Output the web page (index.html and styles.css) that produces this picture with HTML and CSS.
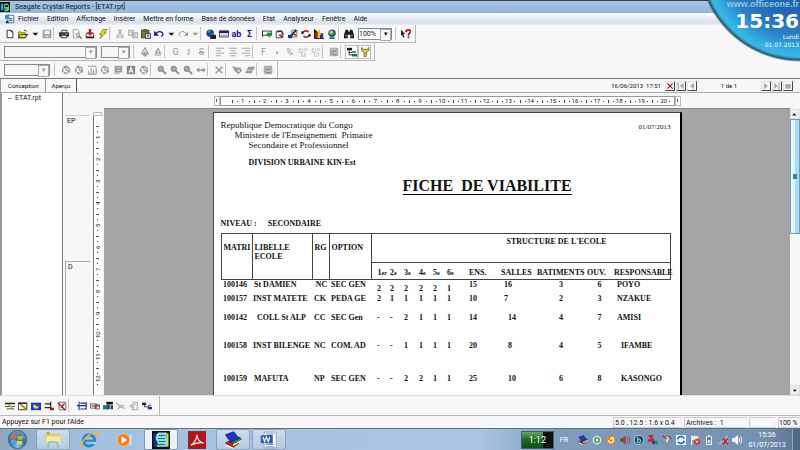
FILE: index.html
```html
<!DOCTYPE html>
<html lang="fr">
<head>
<meta charset="utf-8">
<title>Seagate Crystal Reports - [ETAT.rpt]</title>
<link rel="stylesheet" href="styles.css">
</head>
<body>
<svg class="sprite" aria-hidden="true">
  <symbol id="app" viewBox="0 0 12 12"><path fill="#111" d="M0 0h12v12H0z"/><path fill="#2aa8c8" d="M1 2h3v8H1z"/><path fill="#5fd8a0" d="M5 2h5v2H6v2h4v5H5V9h3V8H5z"/><path fill="#e8e040" d="M10 4h1v6h-1z"/></symbol>
  <symbol id="doc" viewBox="0 0 12 12"><path fill="#fff" stroke="#267" d="M3.500 1.500h7v9h-7z"/><path fill="#2a9aa8" d="M0 1h5v5H0z"/><path fill="#137" d="M5 5h4v1H5zM5 7h4v1H5zM1 8h3v3H1z"/></symbol>
  <symbol id="new" viewBox="0 0 12 12"><path fill="#fff" stroke="#111" d="M2.500 1.500h5l2 2v7h-7zM7.500 1.500v2h2"/></symbol>
  <symbol id="open" viewBox="0 0 12 12"><path fill="#e5d83a" stroke="#776a00" d="M.5 10.500v-7h3l1 1h4v2h3l-3 4z"/><path fill="none" stroke="#222" d="M.5 10.500l2-4h9l-3 4zM7 2q2-1.500 3.500 1"/></symbol>
  <symbol id="arrow" viewBox="0 0 12 12"><path fill="currentColor" d="M3 4.500h7L6.500 8z"/></symbol>
  <symbol id="save" viewBox="0 0 12 12"><path fill="#aaa" stroke="#888" d="M1.500 1.500h9v9h-9z"/><path fill="#f4f4f4" d="M3 2h6v4H3z"/><path fill="#ddd" d="M4 8h4v2H4z"/></symbol>
  <symbol id="print" viewBox="0 0 12 12"><path fill="#fff" stroke="#222" d="M3.500 4V1.500h6V4"/><path fill="#555" stroke="#111" d="M.5 4.500h11v4H.5z"/><path fill="#fff" stroke="#111" d="M2.500 7.500h7v3h-7z"/><path fill="#dd0" d="M8 5.500h2v1H8z"/></symbol>
  <symbol id="preview" viewBox="0 0 12 12"><path fill="#f2f2f2" stroke="#999" d="M1.500.5h5l2 2v8h-7z"/><circle cx="7" cy="7" r="2" fill="#ddd" stroke="#888"/><path stroke="#888" stroke-width="2" d="M8.500 8.500l3 3"/></symbol>
  <symbol id="export" viewBox="0 0 12 12"><path fill="#eee" stroke="#444" d="M1.500 5.500h9v5h-9z"/><path fill="#c01818" d="M4.500 0h3v4H10L6 8 2 4h2.500z"/><path fill="#222" d="M1 9h10v2H1z"/></symbol>
  <symbol id="bolt" viewBox="0 0 12 12"><path fill="#f5e518" stroke="#665c00" stroke-width=".8" d="M6 .5h5L7.500 4H10l-8 7.500L5 6.500H2z"/></symbol>
  <symbol id="cut" viewBox="0 0 12 12"><path fill="none" stroke="#999" stroke-width="1.200" d="M4 0l4 7.500M8 0L4 7.500"/><circle cx="3.500" cy="9" r="1.600" fill="none" stroke="#999"/><circle cx="8.500" cy="9" r="1.600" fill="none" stroke="#999"/></symbol>
  <symbol id="copy" viewBox="0 0 12 12"><path fill="#eee" stroke="#999" d="M.5 1.500h6v6h-6zM5.500 4.500h6v6h-6z"/><path stroke="#aaa" d="M2 3.500h3M7 6.500h3M7 8.500h3"/></symbol>
  <symbol id="paste" viewBox="0 0 12 12"><path fill="#8a8020" stroke="#222" d="M.5 1.500h9v9h-9z"/><path fill="#ddd" stroke="#222" d="M3.500.5h3v2h-3z"/><path fill="#fff" stroke="#1a1a90" d="M5.500 5.500h6v6h-6z"/><path stroke="#1a1a90" d="M7 7.500h3M7 9.500h3"/></symbol>
  <symbol id="undo" viewBox="0 0 12 12"><path fill="none" stroke="currentColor" stroke-width="1.500" d="M2 6q4-5 8-1.500Q12 7 8.500 9"/><path fill="currentColor" d="M0 2v6h6z"/></symbol>
  <symbol id="redo" viewBox="0 0 12 12"><path fill="none" stroke="currentColor" stroke-width="1.200" d="M10 6Q6 1 2 4.500 0 7 3.500 9"/><path fill="currentColor" d="M12 3v5H7z"/></symbol>
  <symbol id="globe" viewBox="0 0 12 12"><circle cx="5" cy="5" r="4.500" fill="#1c3f8c"/><path fill="#38a060" d="M2 2l3-1 1 2-2 2-2-1zM6 5l3 0-1 3-2-1z"/><path fill="#222" d="M7 7h5v5H5V9z"/></symbol>
  <symbol id="field" viewBox="0 0 12 12"><path fill="#fff" stroke="#223" d="M.5 2.500h11v7H.5z"/><path fill="#1a1a80" d="M0 2h12v3H0z"/><path stroke="#334" stroke-dasharray="2 1" d="M2 7.500h9"/></symbol>
  <symbol id="section" viewBox="0 0 12 12"><path fill="#fff" stroke="#222" d="M.5 2.500h11v5H.5z"/><path stroke="#222" d="M.5 2v8"/><path fill="#18903a" d="M5 6l4-3v2h3v3H9v3z" transform="rotate(-20 8 7)"/></symbol>
  <symbol id="sort" viewBox="0 0 12 12"><path fill="#fff" stroke="#333" d="M1.500 2.500h7v8h-7z"/><path fill="none" stroke="#222" stroke-width="1.500" d="M3 4q5-4 7 3"/><path stroke="#b02020" stroke-width="2" d="M5 7l5 3"/></symbol>
  <symbol id="brush" viewBox="0 0 12 12"><path fill="#fff" stroke="#555" d="M4.500 1.500h6v8h-6z"/><path stroke="#222" stroke-width="2" d="M10 1L4 8"/><path fill="#1d2f9a" d="M0 7h5v4H0z"/><path fill="#b22" d="M7 6h3v2H7z"/></symbol>
  <symbol id="refresh" viewBox="0 0 12 12"><path fill="none" stroke="#902020" stroke-width="1.800" d="M2 6q0-4 5-4l2 2M10 6q0 4-5 4L3 8"/><path fill="#222" d="M0 3l4 0-3 4zM12 9H8l3-4z"/></symbol>
  <symbol id="chart" viewBox="0 0 12 12"><path stroke="#111" d="M.5 0v11.500H12"/><path fill="#c22" d="M1.500 4h3v7h-3z"/><path fill="#dfd020" d="M4.500 1h3v10h-3z"/><path fill="#2233b0" d="M8 5h3v6H8z"/></symbol>
  <symbol id="map" viewBox="0 0 12 12"><circle cx="6" cy="5" r="4.500" fill="#1d4fb0"/><path fill="#c8d020" d="M3 2l4 0 1 3-3 2-2-2z"/><path fill="#118048" d="M7 5l3 0-2 4-2-1zM3 10h6v2H3z"/></symbol>
  <symbol id="find" viewBox="0 0 12 12"><path fill="#1a1a1a" d="M2 1h3v2h2V1h3l2 6v4H7.500V7h-3v4H0V7z"/><path fill="#ddd" d="M2 7h1v2H2zM9 7h1v2H9z"/></symbol>
  <symbol id="help" viewBox="0 0 12 12"><path fill="#222" d="M0 1l5 5H3l1 4-1.500.5L1.500 7 0 8z"/><path fill="none" stroke="#b01818" stroke-width="2" d="M6 4q0-3 3-3t2 3L9 6.500V8"/><path fill="#b01818" d="M8 9h2v2H8z"/></symbol>
  <symbol id="grow" viewBox="0 0 12 12"><path fill="none" stroke="#999" stroke-width="1.400" d="M2 8l4-7 4 7zM6 5v6M4 9l2 2 2-2"/></symbol>
  <symbol id="shrink" viewBox="0 0 12 12"><path fill="none" stroke="#999" stroke-width="1.300" d="M3 7l3-5 3 5zM2 9.500h8"/></symbol>
  <symbol id="left" viewBox="0 0 12 12"><path stroke="#999" d="M1 1.500h10M1 4.500h6M1 7.500h10M1 10.500h6"/></symbol>
  <symbol id="center" viewBox="0 0 12 12"><path stroke="#999" d="M1 1.500h10M3 4.500h6M1 7.500h10M3 10.500h6"/></symbol>
  <symbol id="right" viewBox="0 0 12 12"><path stroke="#999" d="M1 1.500h10M5 4.500h6M1 7.500h10M5 10.500h6"/></symbol>
  <symbol id="dot" viewBox="0 0 12 12"><path fill="#999" d="M5 5.500h2v2.500H5z"/></symbol>
  <symbol id="dec" viewBox="0 0 12 12"><path fill="none" stroke="#999" stroke-dasharray="2 1" d="M1.500 2.500h4v4h-4zM7 1l4 2-4 2M4.500 8v3h4V7"/></symbol>
  <symbol id="box" viewBox="0 0 12 12"><path fill="#bbb" stroke="#999" d="M1.500 1.500h9v9h-9z"/><path fill="none" stroke="#777" d="M3 8q1-5 3-3t3-2M4 9h5"/></symbol>
  <symbol id="tree" viewBox="0 0 12 12"><path fill="#111" d="M0 1h6v3H0z"/><path fill="none" stroke="#111" d="M2.500 4v5.500H6M2.500 6.500H6"/><path fill="#1c7040" d="M6 5h5v2H6zM6 8.500h6v3H6z"/></symbol>
  <symbol id="key" viewBox="0 0 12 12"><path fill="#e8dc20" stroke="#333" stroke-width=".8" d="M2 .5v4l3 2v5h2.500v-5l3-2v-4L8.500 3h-4z"/></symbol>
  <symbol id="pie" viewBox="0 0 12 12"><circle cx="6" cy="6" r="4" fill="none" stroke="#999" stroke-width="2" stroke-dasharray="4 1"/><path stroke="#999" stroke-width="1.500" d="M6 6V1M6 6l4 2"/></symbol>
  <symbol id="bars" viewBox="0 0 12 12"><path fill="none" stroke="#999" stroke-width="1.300" d="M1 1.500h10M2 11V7M5 11V4M8 11V6M11 11V3M1 11h10"/></symbol>
  <symbol id="fill" viewBox="0 0 12 12"><path fill="#999" d="M2 1h9v8H2z"/><path stroke="#ddd" d="M4 3.500h5M4 6.500h5"/><path fill="#bbb" d="M1 9h7v2H1z"/></symbol>
  <symbol id="abox" viewBox="0 0 12 12"><path fill="#888" d="M1 1h10v10H1z"/><path fill="none" stroke="#fff" stroke-width="1.300" d="M3.500 9.500L6 3l2.500 6.500M4.500 7.500h3"/></symbol>
  <symbol id="lens" viewBox="0 0 12 12"><circle cx="4.500" cy="4.500" r="3" fill="#aaa" stroke="#888" stroke-width="1.400"/><path stroke="#888" stroke-width="2" d="M7 7l4 4"/></symbol>
  <symbol id="wide" viewBox="0 0 12 12"><path fill="#999" d="M0 6l4-3v2h4V3l4 3-4 3V7H4v2z"/></symbol>
  <symbol id="x" viewBox="0 0 12 12"><path stroke="currentColor" stroke-width="1.800" d="M2 2l8 8M10 2l-8 8"/></symbol>
  <symbol id="tag" viewBox="0 0 12 12"><path fill="#999" d="M0 1l5 2h5l2 4-4 4-4-3z"/><circle cx="8" cy="7" r="1.500" fill="#ddd"/></symbol>
  <symbol id="layers" viewBox="0 0 12 12"><path fill="#999" d="M4 2h8L10 6H2zM2 6h8L8 10H0z"/><path stroke="#ddd" d="M2 6.500h8"/></symbol>
  <symbol id="tool1" viewBox="0 0 12 12"><path fill="#222" d="M0 2h12v2H0zM0 6h12v1H0zM2 9h9v1H2z"/><path stroke="#c9b820" stroke-width="2" d="M3 4l6 4"/></symbol>
  <symbol id="tool2" viewBox="0 0 12 12"><path fill="#fff" stroke="#222" d="M.5 2.500h10v8H.5z"/><path stroke="#a58a10" stroke-width="2" d="M2 3l8 7"/><path fill="#222" d="M0 2h11v1.500H0z"/></symbol>
  <symbol id="tool3" viewBox="0 0 12 12"><path fill="#153ac8" d="M0 2h12v9H0z"/><path fill="#e6e23a" d="M2 6l3-2 2 3 3-2-2 4H4z"/></symbol>
  <symbol id="tool4" viewBox="0 0 12 12"><path fill="none" stroke="#222" stroke-width="1.500" d="M1 3.500h7V8H1M8 1v10"/><path fill="#a22" d="M8 8h4v3H8z"/></symbol>
  <symbol id="tool5" viewBox="0 0 12 12"><path fill="#fff" stroke="#555" d="M2.500 1.500h8v9h-8z"/><path stroke="#a22" stroke-width="1.800" d="M1 2l9 9M9 3L5 8"/></symbol>
  <symbol id="tool6" viewBox="0 0 12 12"><path fill="none" stroke="#1a2f90" stroke-width="1.300" d="M4 2.500h8M4 5.500h8M4 9.500h8M2.500 1v10M0 5.500h4M11 2v8"/></symbol>
  <symbol id="tool7" viewBox="0 0 12 12"><path fill="#fff" stroke="#444" d="M.5 3.500h7v5h-7zM6.500 4.500h5v5h-5z"/><path stroke="#b22" stroke-width="1.500" d="M2 6h9"/></symbol>
  <symbol id="tool8" viewBox="0 0 12 12"><path fill="#111" d="M4 1h8v3H4z"/><path fill="#18804a" d="M0 5h5v5H0z"/><path fill="#1a2fa0" d="M5 4h3v6H5z"/><path fill="#444" d="M9 5h3v5H9z"/></symbol>
  <symbol id="tool9" viewBox="0 0 12 12"><path fill="none" stroke="#aaa" stroke-width="1.500" d="M0 2l5 4 5-1M5 6l-3 4M5 7l6 2"/></symbol>
  <symbol id="tool10" viewBox="0 0 12 12"><path fill="none" stroke="#aaa" stroke-width="1.300" d="M4 1.500h6v9H3M1 6l4-2v5zM6 4h2"/></symbol>
  <symbol id="tool11" viewBox="0 0 12 12"><path fill="#222" d="M0 2h5v3H0z"/><path fill="none" stroke="#222" d="M3 5v2h5V5h3"/><path fill="#1a2fa0" d="M7 7h5v3H7z"/></symbol>
  <symbol id="first" viewBox="0 0 12 12"><path fill="#aaa" d="M1 1h2v10H1zM10 1v10L4 6z"/></symbol>
  <symbol id="prev" viewBox="0 0 12 12"><path fill="#aaa" d="M9 1v10L3 6z"/></symbol>
  <symbol id="next" viewBox="0 0 12 12"><path fill="#aaa" d="M3 1v10l6-5z"/></symbol>
  <symbol id="last" viewBox="0 0 12 12"><path fill="#aaa" d="M2 1v10l5-5zM8 1h2v10H8z"/></symbol>
  <symbol id="stop" viewBox="0 0 12 12"><path fill="#aaa" d="M2 3h8v7H2z"/></symbol>
  <radialGradient id="orbfill" cx=".5" cy=".9" r=".9"><stop offset="0" stop-color="#6fd0f0"/><stop offset=".5" stop-color="#2a6ca8"/><stop offset="1" stop-color="#7c9cb8"/></radialGradient>
  <symbol id="orb" viewBox="0 0 24 24"><circle cx="12" cy="12" r="10.500" fill="url(#orbfill)" stroke="#345f88"/><path fill="#e8692c" d="M5.500 7q3-2 6 0l-.8 4.500q-3-1.500-6 0z"/><path fill="#8fc43c" d="M12.500 7.300q3 1.500 6.500 0l-1 4.500q-3 1.500-6.300 0z"/><path fill="#4aa8e8" d="M4.500 12.500q3-1.500 6 0L9.800 17q-3-1.500-6 0z"/><path fill="#f8cc38" d="M11.500 13q3 1.500 6.300 0L17 17.300q-3 1.500-6.300 0z"/></symbol>
  <symbol id="folder" viewBox="0 0 24 24"><path fill="#e8c860" d="M2 2h7l2 2h11v14H2z"/><path fill="#f8e8a0" d="M3 7h19v11H3z"/><path fill="#4aa860" d="M4 2h3v2H4z"/><path fill="none" stroke="#8cc4e8" stroke-width="3" d="M5.500 23v-6q0-2 2-2h9q2 0 2 2v6"/></symbol>
  <symbol id="ie" viewBox="0 0 24 24"><circle cx="12" cy="12.500" r="7.500" fill="none" stroke="#2888d8" stroke-width="4"/><path stroke="#2888d8" stroke-width="3" d="M6 13h14"/><path fill="#b0c9e4" d="M14 14.500h8v3h-8z"/><path fill="none" stroke="#e8b828" stroke-width="2" d="M3 21Q-1 18 8 9t14-7q2 1-1 6"/></symbol>
  <symbol id="wmp" viewBox="0 0 24 24"><path fill="#8ec4e4" d="M10 2h13v20H10z"/><path fill="#c4e2f2" d="M18 4h3v16h-3z"/><circle cx="10" cy="12" r="8.500" fill="#f08020" stroke="#f8d0a0"/><path fill="#fff" d="M7.500 7v10l7-5z"/></symbol>
  <symbol id="crystal" viewBox="0 0 24 24"><path fill="#111" d="M0 0h24v24H0z"/><path fill="#1c2a8c" d="M2 3h5v18H2z"/><path fill="#d8d83a" d="M19 3h3v18h-3z"/><path fill="#8fe0d4" d="M8 2h12q-3 4 0 8t-1 11H6q3-4 0-8t2-11z"/><path stroke="#146a68" stroke-width="1.500" d="M9 6h8M8 10h9M9 14h9M8 18h9"/></symbol>
  <symbol id="pdf" viewBox="0 0 24 24"><path fill="#b81418" stroke="#7c0c10" d="M.5.500h23v23H.5z"/><path fill="none" stroke="#fff" stroke-width="1.600" d="M4 19q7-5 8-14 1 10 9 11-8-2-17 3z"/></symbol>
  <symbol id="books" viewBox="0 0 24 24"><path fill="#c82028" stroke="#611" d="M2 16l9-5 9 5-8 6z"/><path fill="#fff" d="M3 18l9 4v2l-9-4z"/><path fill="#28a038" stroke="#141" d="M9 12l12-4 2 4-11 6z"/><path fill="#fff" d="M12 18l11-6v2l-11 6z"/><path fill="#1c34c8" stroke="#0a1560" d="M2 5l11-4 7 9-11 5z"/></symbol>
  <symbol id="word" viewBox="0 0 24 24"><path fill="#fff" stroke="#88a" d="M5.500 1.500h16v21h-16z"/><path stroke="#7a9ad0" stroke-width="1.500" d="M8 4h11M8 18h11M8 21h11"/><path fill="#2a5cb0" d="M1 6l16-1v12L1 16z"/><path fill="none" stroke="#fff" stroke-width="1.600" d="M4 8l2 6 2.500-6L11 14l2-6"/></symbol>
  <symbol id="gear" viewBox="0 0 12 12"><circle cx="6" cy="6" r="4.500" fill="#5c9a70" stroke="#e4e8e4" stroke-width="1.500"/><circle cx="6" cy="6" r="1.800" fill="#dfe8df"/></symbol>
  <symbol id="swirl" viewBox="0 0 12 12"><circle cx="6" cy="6" r="5.500" fill="#f08018"/><path fill="none" stroke="#fff" stroke-width="1.500" d="M6 3a3 3 0 1 1-3 3M6 3v3"/></symbol>
  <symbol id="speaker" viewBox="0 0 12 12"><path fill="currentColor" d="M0 4h3l4-4v12L3 8H0z"/><path fill="none" stroke="currentColor" d="M8.500 3q2 3 0 6M10.500 1.500q2.500 4.500 0 9"/></symbol>
  <symbol id="bsign" viewBox="0 0 12 12"><circle cx="6" cy="6" r="5.500" fill="#1c3c98" stroke="#bcd"/><path fill="none" stroke="#7fd860" stroke-width="1.500" d="M4.500 2v7h2.500a2 2 0 1 0-2.500-3"/></symbol>
  <symbol id="shield" viewBox="0 0 12 12"><path fill="#d02028" d="M0 0h6v3H3v1h4v4H0V5h3z"/><path fill="#2038a8" d="M5 7h4v4H5z"/><path fill="#20963a" d="M8 7h4v4H8z"/></symbol>
  <symbol id="plug" viewBox="0 0 12 12"><path fill="#ddd" stroke="#666" stroke-width=".7" d="M2 2l8 0-2 5-2 5-2-5z"/><path stroke="#c22" stroke-width="1.500" d="M1 1l5 4M8 1l3 4"/></symbol>
  <symbol id="sync" viewBox="0 0 12 12"><path fill="#eef6fc" d="M0 0h12v12H0z"/><path fill="none" stroke="#1a74c8" stroke-width="2" d="M2 5q1-3.500 5-3l3 2M10 7q-1 3.500-5 3L2 8"/></symbol>
  <symbol id="flag" viewBox="0 0 12 12"><path stroke="#eee" stroke-width="1.500" d="M2 1v11"/><path fill="#eee" d="M2 1h8v5H2z"/><circle cx="8.500" cy="8" r="3.500" fill="#d82828"/><path stroke="#fff" d="M7 6.500l3 3M10 6.500l-3 3"/></symbol>
  <symbol id="battery" viewBox="0 0 12 12"><path fill="#68788a" stroke="#eee" stroke-width="1.300" d="M3 2h6v9.500H3zM5 .5h2"/><path fill="#ddd" d="M4.500 6h3v4h-3z"/></symbol>
  <symbol id="net" viewBox="0 0 12 12"><path fill="#aab4c0" d="M0 9h2v2H0zM3 7h2v4H3zM6 4h2v7H6zM9 1h3v10H9z"/><path stroke="#c82020" stroke-width="2" d="M6 4l6 7M12 4l-6 7"/></symbol>
</svg>

<header class="titlebar"><svg class="ico"><use href="#app"/></svg><h1>Seagate Crystal Reports - [ETAT.rpt]</h1></header>
<nav class="menubar">
  <svg class="ico"><use href="#doc"/></svg>
  <button>Fichier</button><button>Edition</button><button>Affichage</button><button>Insérer</button><button>Mettre en forme</button><button>Base de données</button><button>Etat</button><button>Analyseur</button><button>Fenêtre</button><button>Aide</button>
</nav>

<div class="toolbars">
  <div class="toolbar tight">
    <button aria-label="Nouveau"><svg><use href="#new"/></svg></button><button aria-label="Ouvrir"><svg><use href="#open"/></svg></button><button class="drop" aria-label="Fichiers"><svg><use href="#arrow"/></svg></button><button aria-label="Enregistrer"><svg><use href="#save"/></svg></button><i></i>
    <button aria-label="Imprimer"><svg><use href="#print"/></svg></button><button aria-label="Aperçu"><svg><use href="#preview"/></svg></button><button aria-label="Exporter"><svg><use href="#export"/></svg></button><button aria-label="Actualiser"><svg><use href="#bolt"/></svg></button><i></i>
    <button aria-label="Couper"><svg><use href="#cut"/></svg></button><button aria-label="Copier"><svg><use href="#copy"/></svg></button><button aria-label="Coller"><svg><use href="#paste"/></svg></button><button class="blue" aria-label="Annuler"><svg><use href="#undo"/></svg></button><button class="drop" aria-label="Liste annuler"><svg><use href="#arrow"/></svg></button><button class="off" aria-label="Rétablir"><svg><use href="#redo"/></svg></button><button class="drop off" aria-label="Liste rétablir"><svg><use href="#arrow"/></svg></button><i></i>
    <button aria-label="Web"><svg><use href="#globe"/></svg></button><button aria-label="Champ"><svg><use href="#field"/></svg></button><button class="blue">ab</button><button class="blue">Σ</button><i></i>
    <button aria-label="Section"><svg><use href="#section"/></svg></button><button aria-label="Trier"><svg><use href="#sort"/></svg></button><button aria-label="Style"><svg><use href="#brush"/></svg></button><button aria-label="Rotation"><svg><use href="#refresh"/></svg></button><button aria-label="Graphique"><svg><use href="#chart"/></svg></button><button aria-label="Carte"><svg><use href="#map"/></svg></button><i></i>
    <button aria-label="Rechercher"><svg><use href="#find"/></svg></button>
    <span class="combo zoom"><select aria-label="Zoom"><option>100%</option></select></span><i></i>
    <button aria-label="Aide contextuelle"><svg><use href="#help"/></svg></button>
  </div>
  <div class="toolbar">
    <span class="combo font off"><select aria-label="Police"><option></option></select></span><span class="combo size off"><select aria-label="Taille"><option></option></select></span><i></i>
    <button aria-label="Agrandir"><svg><use href="#grow"/></svg></button><button aria-label="Réduire"><svg><use href="#shrink"/></svg></button><i></i>
    <button class="off">G</button><button class="off ital">I</button><button class="off strike">S</button><i></i>
    <button aria-label="Gauche"><svg><use href="#left"/></svg></button><button aria-label="Centrer"><svg><use href="#center"/></svg></button><button aria-label="Droite"><svg><use href="#right"/></svg></button><i></i>
    <button class="off">F</button><button aria-label="Milliers"><svg><use href="#dot"/></svg></button><button class="off">%</button><button aria-label="Plus de décimales"><svg><use href="#dec"/></svg></button><button aria-label="Moins de décimales"><svg><use href="#dec"/></svg></button><i></i>
    <button aria-label="Image"><svg><use href="#box"/></svg></button><i></i>
    <button class="on" aria-label="Arborescence"><svg><use href="#tree"/></svg></button><button class="on" aria-label="Outils"><svg><use href="#key"/></svg></button>
  </div>
  <div class="toolbar">
    <span class="combo kind off"><select aria-label="Type"><option></option></select></span><i></i>
    <button aria-label="Secteurs"><svg><use href="#pie"/></svg></button><button aria-label="Anneau"><svg><use href="#pie"/></svg></button><button aria-label="Barres"><svg><use href="#bars"/></svg></button><button aria-label="Radar"><svg><use href="#pie"/></svg></button><button aria-label="Remplissage"><svg><use href="#fill"/></svg></button><button aria-label="Texte"><svg><use href="#abox"/></svg></button><button aria-label="Options"><svg><use href="#pie"/></svg></button><i></i>
    <button aria-label="Zoom avant"><svg><use href="#lens"/></svg></button><button aria-label="Zoom arrière"><svg><use href="#lens"/></svg></button><button aria-label="Zoom zone"><svg><use href="#lens"/></svg></button><button aria-label="Largeur"><svg><use href="#wide"/></svg></button><i></i>
    <button class="off" aria-label="Supprimer"><svg><use href="#x"/></svg></button><i></i>
    <button aria-label="Étiquette"><svg><use href="#tag"/></svg></button><button aria-label="Couches"><svg><use href="#layers"/></svg></button><i></i>
    <button aria-label="Cadre"><svg><use href="#box"/></svg></button>
  </div>
</div>

<div class="tabs">
  <button class="tab">Conception</button><button class="tab active">Aperçu</button>
  <div class="pager">
    <time>16/06/2013&nbsp; 17:51</time>
    <button class="close" aria-label="Fermer"><svg><use href="#x"/></svg></button><button aria-label="Première"><svg><use href="#first"/></svg></button><button aria-label="Précédente"><svg><use href="#prev"/></svg></button>
    <span class="pages">1 de 1</span>
    <button aria-label="Suivante"><svg><use href="#next"/></svg></button><button aria-label="Dernière"><svg><use href="#last"/></svg></button><button aria-label="Arrêter"><svg><use href="#stop"/></svg></button>
  </div>
</div>

<main class="work">
  <aside class="outline">ETAT.rpt</aside>
  <div class="bands"><div class="band head">EP</div><div class="band detail">D</div></div>
  <div class="vruler"><b></b><div class="vscale"><span>1</span><span>2</span><span>3</span><span>4</span><span>5</span><span>6</span><span>7</span><span>8</span><span>9</span><span>10</span><span>11</span><span>12</span></div></div>
  <div class="view">
    <div class="hruler"><b></b><div class="hscale"><div class="cells"><span>1</span><span>2</span><span>3</span><span>4</span><span>5</span><span>6</span><span>7</span><span>8</span><span>9</span><span>10</span><span>11</span><span>12</span><span>13</span><span>14</span><span>15</span><span>16</span><span>17</span><span>18</span><span>19</span><span>20</span></div></div><b></b></div>
    <div class="canvas">
      <article class="sheet">
        <div class="masthead">
          <div><p>Republique Democratique du Congo</p><p class="step1">Ministere de l'Enseignement&nbsp; Primaire</p><p class="step2">Secondaire et Professionnel</p></div>
          <time>01/07/2013</time>
        </div>
        <p class="division">DIVISION URBAINE KIN-Est</p>
        <h2>FICHE&nbsp; DE VIABILITE</h2>
        <p class="level"><span>NIVEAU :</span><span>SECONDAIRE</span></p>
        <table>
          <colgroup><col class="c-mat"><col class="c-lib"><col class="c-rg"><col class="c-opt"><col class="c-n1"><col class="c-n"><col class="c-n3"><col class="c-n"><col class="c-n"><col class="c-n6"><col class="c-ens"><col class="c-sal"><col class="c-bat"><col class="c-ouv"><col class="c-resp"></colgroup>
          <thead>
            <tr><th rowspan="2" class="boxed">MATRI</th><th rowspan="2" class="boxed">LIBELLE ECOLE</th><th rowspan="2" class="boxed">RG</th><th rowspan="2" class="boxed">OPTION</th><th colspan="11" class="group">STRUCTURE DE L'ECOLE</th></tr>
            <tr class="sub"><th class="num">1<small>er</small></th><th class="num">2<small>e</small></th><th class="num">3<small>e</small></th><th class="num">4<small>e</small></th><th class="num">5<small>e</small></th><th class="num">6<small>e</small></th><th>ENS.</th><th>SALLES</th><th>BATIMENTS</th><th>OUV.</th><th>RESPONSABLE</th></tr>
          </thead>
          <tbody>
            <tr class="r1"><td>100146</td><td>St DAMIEN</td><td class="mid">NC</td><td>SEC GEN</td><td class="num low">2</td><td class="num low">2</td><td class="num low">2</td><td class="num low">2</td><td class="num low">2</td><td class="num low">1</td><td>15</td><td class="in">16</td><td class="mid">3</td><td class="mid">6</td><td class="in">POYO</td></tr>
            <tr class="r2"><td>100157</td><td class="out">INST MATETE</td><td>CK</td><td>PEDA GE</td><td class="num">2</td><td class="num">1</td><td class="num">1</td><td class="num">1</td><td class="num">1</td><td class="num">1</td><td>10</td><td class="in">7</td><td class="mid">2</td><td class="mid">3</td><td class="in">NZAKUE</td></tr>
            <tr class="r3"><td>100142</td><td class="in">COLL St ALP</td><td>CC</td><td>SEC Gen</td><td class="num">-</td><td class="num">-</td><td class="num">2</td><td class="num">1</td><td class="num">1</td><td class="num">1</td><td>14</td><td class="in2">14</td><td class="mid">4</td><td class="mid">7</td><td class="in">AMISI</td></tr>
            <tr class="r4"><td>100158</td><td class="out">INST BILENGE</td><td>NC</td><td>COM. AD</td><td class="num">-</td><td class="num">-</td><td class="num">1</td><td class="num">1</td><td class="num">1</td><td class="num">1</td><td>20</td><td class="in2">8</td><td class="mid">4</td><td class="mid">5</td><td class="in2">IFAMBE</td></tr>
            <tr class="r5"><td>100159</td><td>MAFUTA</td><td>NP</td><td>SEC GEN</td><td class="num">-</td><td class="num">-</td><td class="num">2</td><td class="num">2</td><td class="num">1</td><td class="num">1</td><td>25</td><td class="in2">10</td><td class="mid">6</td><td class="mid">8</td><td class="in2">KASONGO</td></tr>
          </tbody>
        </table>
      </article>
    </div>
  </div>
  <div class="scroll"><button aria-label="Haut"><svg><use href="#arrow"/></svg></button><span class="thumb"></span><button aria-label="Bas"><svg><use href="#arrow"/></svg></button></div>
</main>

<div class="toolbar analyser">
  <button aria-label="Liens"><svg><use href="#tool1"/></svg></button><button aria-label="Tables"><svg><use href="#tool2"/></svg></button><button aria-label="Carte"><svg><use href="#tool3"/></svg></button><button aria-label="Groupe"><svg><use href="#tool4"/></svg></button><button aria-label="Filtre"><svg><use href="#tool5"/></svg></button><i></i>
  <button aria-label="Trame"><svg><use href="#tool6"/></svg></button><button aria-label="Champs"><svg><use href="#tool7"/></svg></button><button aria-label="Série"><svg><use href="#tool8"/></svg></button><button aria-label="Branche"><svg><use href="#tool9"/></svg></button><button aria-label="Retour"><svg><use href="#tool10"/></svg></button><button aria-label="Schéma"><svg><use href="#tool11"/></svg></button>
</div>
<div class="status"><span class="msg">Appuyez sur F1 pour l'Aide</span><span class="cell pos">5.0 , 12.5 : 1.6 x 0.4</span><span class="cell rec">Archives :&nbsp; 1</span><span class="cell gap"></span><span class="cell pct">100 %</span></div>

<footer class="taskbar">
  <button class="start" aria-label="Démarrer"><svg><use href="#orb"/></svg></button>
  <button class="task open" aria-label="Explorateur"><svg><use href="#folder"/></svg></button>
  <button class="task" aria-label="Internet"><svg><use href="#ie"/></svg></button>
  <button class="task" aria-label="Lecteur"><svg><use href="#wmp"/></svg></button>
  <button class="task current" aria-label="Crystal Reports"><svg><use href="#crystal"/></svg></button>
  <button class="task" aria-label="Lecteur PDF"><svg><use href="#pdf"/></svg></button>
  <button class="task open" aria-label="Livres"><svg><use href="#books"/></svg></button>
  <button class="task open" aria-label="Traitement de texte"><svg><use href="#word"/></svg></button>
  <div class="tray">
    <span class="meter">1:12</span><span class="lang">FR</span>
    <div class="trayicons"><svg><use href="#books"/></svg><svg><use href="#gear"/></svg><svg><use href="#swirl"/></svg><svg class="red"><use href="#speaker"/></svg><svg><use href="#bsign"/></svg><svg><use href="#shield"/></svg><svg><use href="#plug"/></svg><svg><use href="#sync"/></svg><svg><use href="#flag"/></svg><svg><use href="#battery"/></svg><svg><use href="#net"/></svg><svg><use href="#speaker"/></svg></div>
    <div class="clock"><time>15:36</time><time>01/07/2013</time></div>
    <button class="desk" aria-label="Bureau"></button>
  </div>
</footer>

<div class="gadget"><a href="#">www.officeone.fr</a><strong>15:36</strong><span>Lundi</span><span>01.07.2013</span></div>
</body>
</html>
```
FILE: styles.css
```css
* { box-sizing: border-box; }
html, body { height: 100%; }
body {
  margin: 0;
  display: flex;
  flex-direction: column;
  overflow: hidden;
  position: relative;
  background: #f7f7f7;
  color: #111;
  font: 7px/10px Roboto, "Liberation Sans", sans-serif;
}
button, select { font: inherit; color: inherit; border: 0; padding: 0; margin: 0; background: none; }
h1, h2, p { margin: 0; }
svg { display: block; }
.sprite { position: absolute; width: 0; height: 0; }
.ico { width: 10px; height: 10px; flex: none; }

.titlebar {
  flex: none;
  height: 13px;
  display: flex;
  align-items: center;
  gap: 5px;
  border-top: 1px solid #3a3c48;
  background: linear-gradient(#a9c5e2, #93b5d9);
}
.titlebar h1 { font-size: 7px; font-weight: 400; }
.menubar {
  flex: none;
  height: 12px;
  display: flex;
  align-items: center;
  gap: 8px;
  padding-left: 5px;
  background: linear-gradient(#fff, #eef1f8 30%, #d8dfee 80%, #eceef4);
}
.menubar .ico { margin-right: -5px; }

.toolbars { flex: none; border-bottom: 1px solid #777; }
.toolbar {
  width: fit-content;
  height: 18px;
  display: flex;
  align-items: center;
  padding: 0 3px;
  border-right: 1px solid #b8b8b8;
  border-bottom: 1px solid #b8b8b8;
}
.toolbars .toolbar:last-child { height: 17px; border-bottom: 0; }
.toolbar button { width: 13px; height: 14px; display: grid; place-items: center; font-size: 9px; }
.toolbar button svg { width: 10px; height: 10px; }
.toolbar .drop { width: 11px; }
.toolbar i { width: 5px; height: 13px; border-left: 1px solid #c4c4c4; }
.toolbar.tight i { width: 4px; }
.off { color: #999 !important; }
.toolbar .blue { color: #1a1a8c; font-weight: 700; }
.toolbar .ital { font-style: italic; font-family: "Liberation Serif", serif; }
.toolbar .strike { text-decoration: line-through; }
.toolbar .on { background: #fff; border: 1px solid #bbb; }
.combo { position: relative; height: 12px; border: 1px solid #888; background: #fff; }
.combo.off { background: #f7f7f7; }
.combo select { width: 100%; height: 10px; appearance: none; display: block; line-height: 10px; outline: 0; }
.combo::after {
  content: "▾";
  position: absolute;
  top: 0;
  right: 0;
  width: 9px;
  height: 10px;
  border: 1px solid #aaa;
  text-align: center;
  line-height: 8px;
  background: #f7f7f7;
  pointer-events: none;
}
.zoom { width: 34px; margin: 0 3px; }
.font { width: 93px; margin: 0 4px 0 1px; }
.size { width: 29px; margin-right: 3px; }
.kind { width: 46px; margin: 0 4px 0 1px; }

.tabs {
  flex: none;
  height: 14px;
  display: flex;
  align-items: center;
  padding: 0 7px 0 1px;
  border-bottom: 1px solid #aaa;
  border-left: 1px solid #999;
  font-size: 6px;
}
.tab { height: 13px; padding: 0 6px; border-right: 1px solid #999; }
.tab.active { border-right: 1px solid #555; }
.pager { margin-left: auto; display: flex; align-items: center; gap: 1px; }
.pager time { margin-right: 3px; }
.pager button { width: 10px; height: 10px; border: 1px solid #e4e4e4; border-right-color: #444; border-bottom-color: #444; display: grid; place-items: center; }
.pager button svg { width: 8px; height: 8px; }
.pager .close { color: #a01818; }
.pages { width: 62px; text-align: center; }

.work { flex: 1; min-height: 0; display: flex; border-left: 2px solid #999; border-bottom: 1px solid #ddd; }
.outline { width: 61px; padding: 0 6px; background: #fff; border-right: 1px solid #777; display: flex; gap: 3px; height: 100%; }
.outline::before { content: ""; width: 4px; height: 1px; margin-top: 5px; background: #999; }
.bands { width: 30px; padding: 22px 3px 0 2px; display: flex; flex-direction: column; }
.band { border-top: 1px solid #aaa; padding-left: 2px; }
.band.head { height: 146px; border-color: #ccc; }
.band.detail { flex: 1; border-left: 1px solid #aaa; }
.vruler { width: 11px; padding-top: 19px; display: flex; flex-direction: column; overflow: hidden; }
.vruler > b { flex: none; height: 4px; width: 9px; border: 1px solid #bbb; }
.vscale { flex: 1; width: 9px; padding-top: 10px; background: #fff; border-left: 1px solid #777; }
.vscale span {
  height: 22px;
  display: grid;
  place-items: center;
  writing-mode: vertical-rl;
  transform: rotate(180deg);
  font-size: 6px;
  line-height: 8px;
  background:
    linear-gradient(#555, #555) center bottom / 3px 1px no-repeat,
    linear-gradient(#333, #333) center 5px / 1px 1px no-repeat,
    linear-gradient(#333, #333) center 16px / 1px 1px no-repeat;
}
.view { flex: 1; min-width: 0; display: flex; flex-direction: column; }
.hruler { width: 467px; height: 10px; margin: 3px auto 2px; flex: none; display: flex; }
.hruler > b { width: 6px; border: 1px solid #bbb; background: #fff; }
.hruler > b:first-child::before, .hruler > b:last-child::before { content: ""; display: block; width: 1px; height: 3px; margin: 2px auto; background: #555; }
.hscale { flex: 1; overflow: hidden; background: #fff; border: 1px solid #999; padding-left: 11px; }
.cells { width: 443px; display: flex; }
.cells span {
  flex: 1;
  text-align: center;
  font-size: 6px;
  line-height: 8px;
  background:
    linear-gradient(#444, #444) left center / 1px 3px no-repeat,
    linear-gradient(#333, #333) 5px center / 1px 1px no-repeat,
    linear-gradient(#333, #333) 17px center / 1px 1px no-repeat;
}
.canvas { flex: 1; min-height: 0; overflow: hidden; background: #a5a5a5; border-top: 1px solid #888; padding-top: 3px; display: flex; justify-content: center; }
.scroll { width: 10px; padding-top: 16px; display: flex; flex-direction: column; }
.scroll button { height: 10px; border: 1px solid #ddd; background: #eee; }
.scroll button svg { width: 7px; height: 7px; }
.scroll button:first-child svg { transform: rotate(180deg); }
.scroll .thumb { height: 115px; margin-bottom: auto; border: 1px solid #6a9ec8; background: linear-gradient(#3484a4, #3484a4) center / 4px 5px no-repeat, linear-gradient(90deg, #e4f6fe 45%, #a8dcf8 50%); }

.sheet {
  width: 469px;
  flex: none;
  padding: 7px 9px 0 7px;
  background: #fff;
  border: 1px solid #444;
  border-right: 2px solid #000;
  border-bottom: 0;
  font: 700 8px/10px "Liberation Serif", "Times New Roman", serif;
}
.masthead { display: flex; justify-content: space-between; font-weight: 400; font-size: 9px; }
.masthead time { font-size: 7px; padding-top: 2px; }
.step1 { padding-left: 14px; }
.step2, .division { padding-left: 28px; }
.division { margin-top: 8px; }
.sheet h2 { width: fit-content; margin: 9px 0 0 182px; font-size: 16px; line-height: 17px; border-bottom: 1px solid #000; }
.level { display: flex; gap: 11px; margin-top: 24px; }
table { margin-top: 4px; width: 450px; table-layout: fixed; border-collapse: collapse; border-top: 1px solid #222; }
th, td { padding: 0 0 0 2px; vertical-align: top; text-align: left; white-space: nowrap; line-height: 10px; }
thead { border: 1px solid #444; }
.boxed { border-right: 1px solid #444; padding-top: 9px; white-space: normal; line-height: 9px; height: 46px; }
.group { height: 29px; text-align: center; padding: 3px 0 0 72px; border-bottom: 1px solid #444; }
.sub th { height: 17px; padding-top: 5px; }
small { font-size: 6px; }
.c-mat { width: 31px; } .c-lib { width: 60px; } .c-rg { width: 17px; } .c-opt { width: 42px; }
.c-n1 { width: 17px; } .c-n { width: 14px; } .c-n3 { width: 15px; } .c-n6 { width: 22px; }
.c-ens { width: 32px; } .c-sal { width: 36px; } .c-bat { width: 50px; } .c-ouv { width: 27px; }
th.num, td.num { padding-left: 6px; padding-right: 0; }
.num + .num { padding-left: 2px !important; }
.r1 { height: 14px; } .r2 { height: 19px; } .r3 { height: 28px; } .r4 { height: 33px; } .r5 { height: 18px; }
td.low { padding-top: 4px; line-height: 9px; }
td.in { padding-left: 5px; }
td.in2 { padding-left: 9px; }
td.out { padding-left: 1px; }
td.mid { text-align: center; }

.analyser { flex: none; height: 19px; padding-left: 3px; border-bottom: 0; }
.analyser.toolbar i { width: 7px; }
.analyser svg { width: 9px; height: 9px; }
.analyser { padding-right: 6px; }
.status { flex: none; height: 13px; display: flex; align-items: center; gap: 2px; border-top: 1px solid #bbb; padding-left: 2px; }
.msg { flex: 1; }
.cell { height: 11px; padding-left: 1px; border: 1px solid #ccc; border-right-color: #eee; white-space: nowrap; overflow: hidden; }
.pos { width: 69px; } .rec { width: 63px; } .gap { width: 27px; } .pct { width: 22px; padding-left: 0; }

.taskbar { flex: none; height: 22px; display: flex; align-items: stretch; gap: 2px; border-top: 1px solid #5f7386; background: linear-gradient(90deg, #8fa6c0, #a6c1e0 12%, #a9c4e4 60%, #7f9cbc 70%, #7692b2 95%, #5a7490); }
.taskbar button { display: grid; place-items: center; }
.start { width: 34px; }
.start svg { width: 21px; height: 21px; }
.task { width: 34px; border-radius: 2px; }
.task svg { width: 18px; height: 18px; }
.task.open { background: linear-gradient(#ccdcee, #b4cade); border: 1px solid #8ba3bd; }
.task.current { background: #edf3f9; border: 1px solid #7e96b0; }
.tray { margin-left: auto; display: flex; align-items: center; color: #fff; }
.meter { width: 33px; height: 18px; line-height: 17px; text-align: center; font-size: 9px; border: 1px solid #46606a; background: linear-gradient(90deg, transparent 66%, #111 67%), linear-gradient(#6aa46c, #1c6c20 45%, #0c5010); }
.lang { margin: 0 10px 0 6px; }
.trayicons { display: flex; gap: 4px; }
.trayicons svg { width: 10px; height: 10px; }
.red { color: #8c4a3c; }
.clock { width: 50px; text-align: center; display: flex; flex-direction: column; }
.desk { width: 8px; height: 21px; background: #4f6a84; border-left: 1px solid #9ab !important; }

.gadget {
  position: absolute;
  top: 0;
  right: 0;
  width: 94px;
  height: 62px;
  padding-right: 1px;
  display: flex;
  flex-direction: column;
  align-items: flex-end;
  color: #fff;
  font: 6px/8px "DejaVu Sans", sans-serif;
  background: radial-gradient(circle 102px at 94px -40px, #1c5ca8 0, #2466b2 54px, #2a80c6 76px, #34b4e6 93px, #3cb4dc 97px, #1c5870 100px, transparent 102px);
}
.gadget a { color: #8cc8e4; font: 700 9px/9px "Liberation Sans", sans-serif; text-decoration: none; white-space: nowrap; }
.gadget strong { font-size: 20px; line-height: 24px; }
```
